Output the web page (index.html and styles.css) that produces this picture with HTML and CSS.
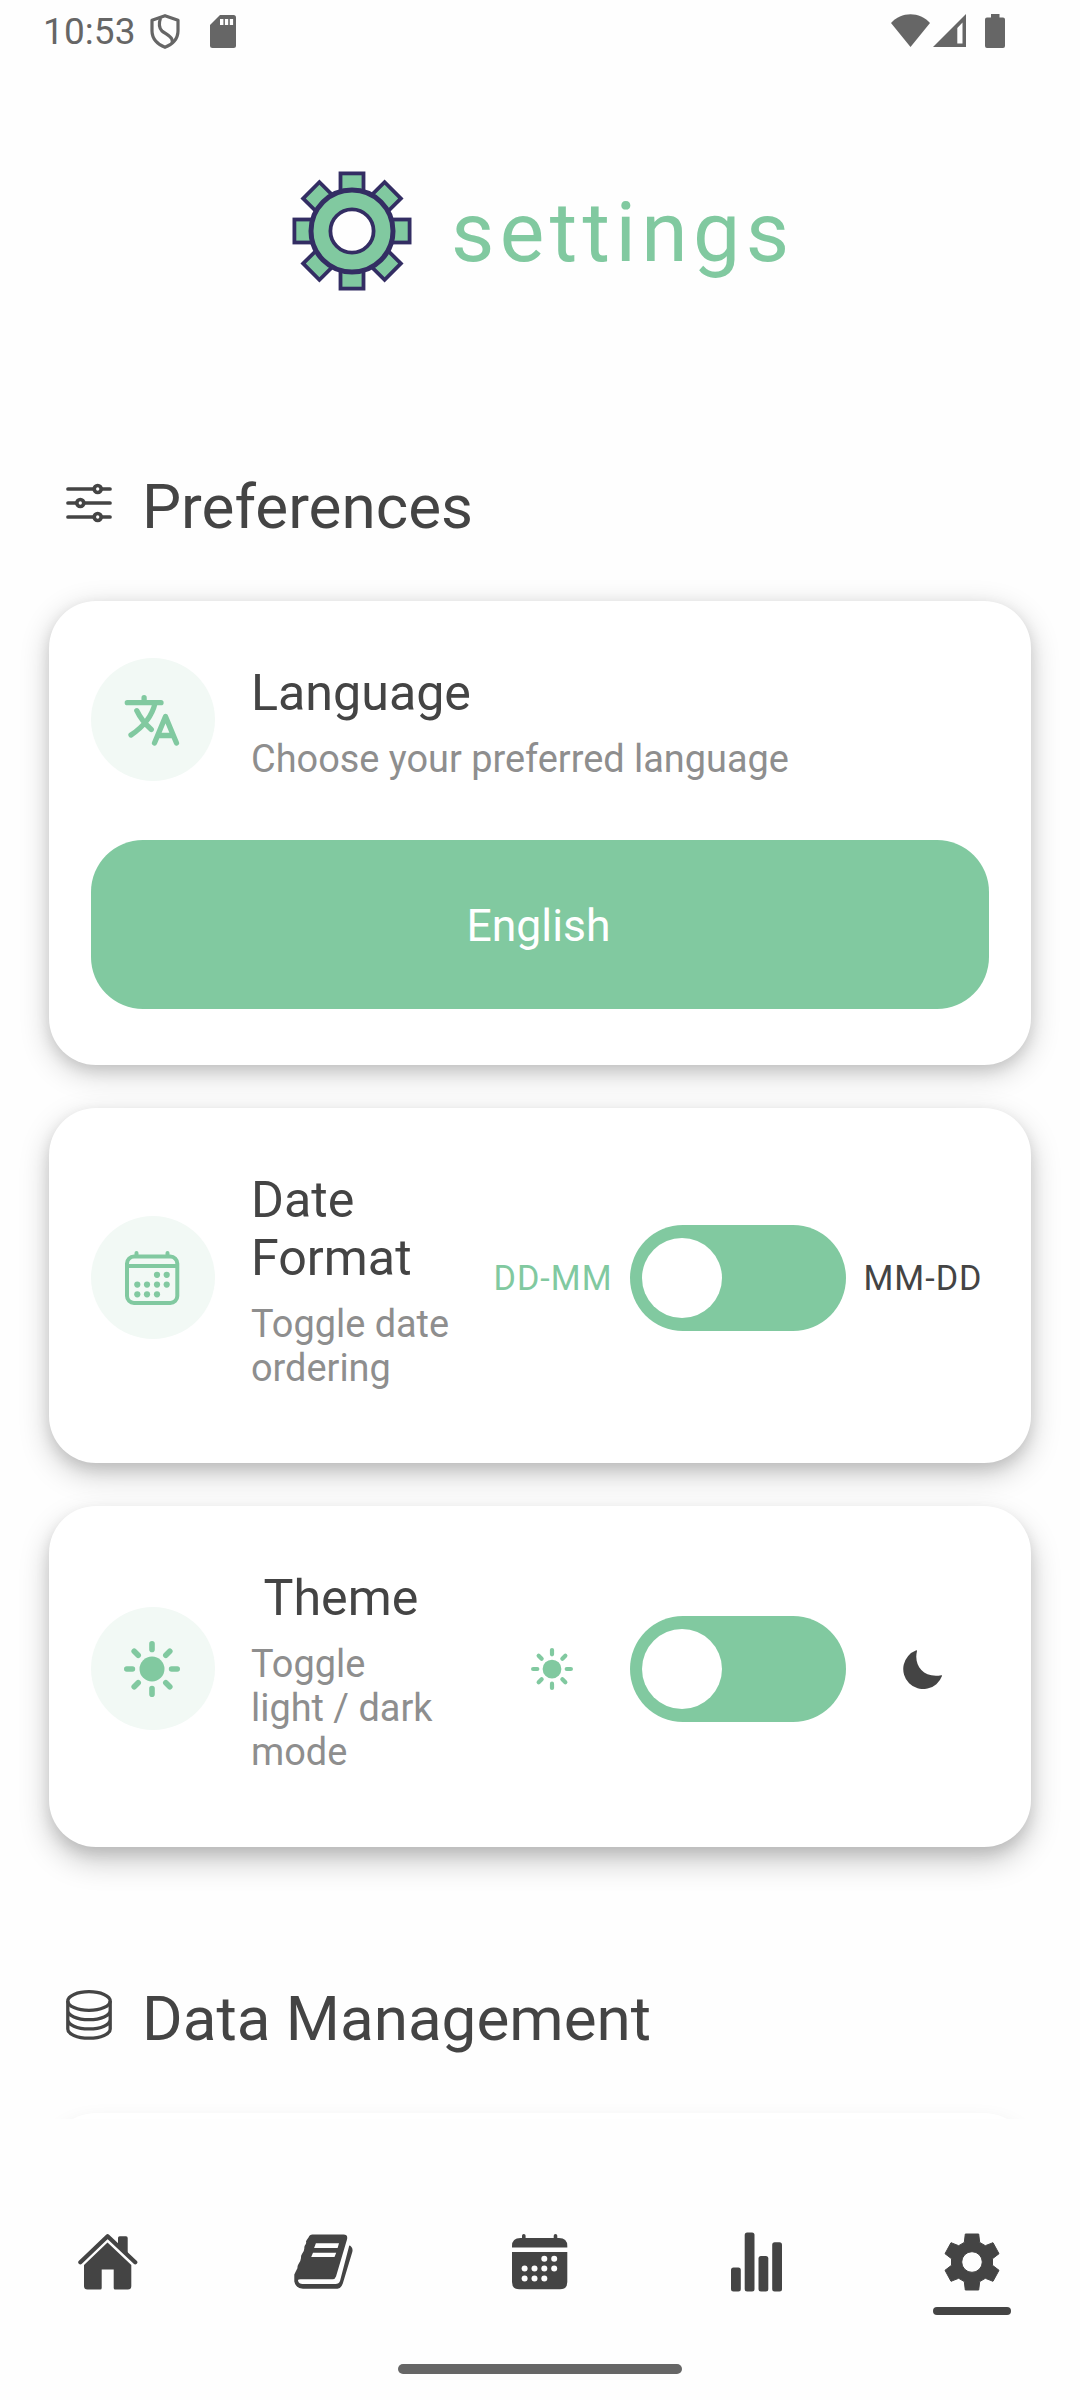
FILE: index.html
```html
<!DOCTYPE html>
<html lang="en">
<head>
<meta charset="utf-8">
<title>Settings</title>
<link rel="stylesheet" href="styles.css">
</head>
<body>
<svg class="defs" width="0" height="0" aria-hidden="true">
  <symbol id="sun" viewBox="0 0 56 56">
    <circle cx="28" cy="28" r="12.500" fill="currentColor"/>
    <path d="M28 2.800v5.600M28 47.600v5.600M2.800 28h5.600M47.600 28h5.600M10.200 10.200l4 4M41.800 41.800l4 4M10.200 45.800l4-4M41.800 14.200l4-4" stroke="currentColor" stroke-width="5.600" stroke-linecap="round"/>
  </symbol>
</svg>

<header class="status">
  <span class="time">10:53</span>
  <svg class="shield" width="30" height="35" viewBox="0 0 30 35" fill="none" stroke="#666" stroke-width="3.200" stroke-linejoin="round">
    <path d="M15 1.700L28 6.200V17C28 24.500 22.500 31 15 33.300C7.500 31 2 24.500 2 17V6.200Z"/>
    <path d="M10.500 4C8.500 10 9 14 12 17C15 19.800 20.500 21.500 22 25.500L22.500 29"/>
  </svg>
  <svg class="sd" width="26" height="33" viewBox="0 0 26 33"><path fill="#666" d="M10 0H23.500Q26 0 26 2.500V30.500Q26 33 23.500 33H2.500Q0 33 0 30.500V10Z"/><path fill="#fefefe" d="M10 4h3.400v6H10zM14.900 4h3.300v6h-3.300zM19.800 4h3.300v6h-3.300z"/></svg>
  <svg class="wifi" width="39" height="33" viewBox="0 0 39 33"><path fill="#666" d="M0 9C10 -2.800 29 -2.800 39 9L19.500 33Z"/></svg>
  <svg class="signal" width="33" height="33" viewBox="0 0 33 33"><path fill="#666" fill-rule="evenodd" d="M33 0V33H0ZM29.500 8.500L24.300 14V29.500H29.500Z"/></svg>
  <svg class="battery" width="20" height="34" viewBox="0 0 20 34"><path fill="#666" d="M6 0h8.500v3.500H18Q20 3.500 20 5.500V32Q20 34 18 34H2Q0 34 0 32V5.500Q0 3.500 2 3.500H6z"/></svg>
</header>

<main class="content">
  <div class="title">
    <svg width="120" height="120" viewBox="-60 -60 120 120" fill="#81c9a0" stroke="#332d63" stroke-width="3.800">
      <g>
        <rect x="-11.500" y="-57.600" width="23" height="24"/>
        <rect x="-11.500" y="-57.600" width="23" height="24" transform="rotate(45)"/>
        <rect x="-11.500" y="-57.600" width="23" height="24" transform="rotate(90)"/>
        <rect x="-11.500" y="-57.600" width="23" height="24" transform="rotate(135)"/>
        <rect x="-11.500" y="-57.600" width="23" height="24" transform="rotate(180)"/>
        <rect x="-11.500" y="-57.600" width="23" height="24" transform="rotate(225)"/>
        <rect x="-11.500" y="-57.600" width="23" height="24" transform="rotate(270)"/>
        <rect x="-11.500" y="-57.600" width="23" height="24" transform="rotate(315)"/>
      </g>
      <circle r="41" stroke-width="5"/>
      <circle r="21.600" fill="#fefefe"/>
    </svg>
    <h1>settings</h1>
  </div>

  <div class="section preferences">
    <svg width="46" height="40" viewBox="0 0 46 40" fill="#fefefe" stroke="#444" stroke-width="3.700" stroke-linecap="round">
      <path d="M2 6H44M2 20H44M2 34H44"/>
      <circle cx="31.700" cy="6" r="3.500"/><circle cx="14.300" cy="20" r="3.500"/><circle cx="31.700" cy="34" r="3.500"/>
    </svg>
    <h2>Preferences</h2>
  </div>

  <section class="card language">
    <div class="row">
      <div class="badge">
        <svg width="56" height="56" viewBox="0 0 56 56" fill="none" stroke="currentColor" stroke-width="5.300" stroke-linecap="round" stroke-linejoin="round">
          <path d="M3.300 10.700H37M20.100 5.700V10M31 11.500C27.500 26 19 35 7 43M12.800 18.700C16 25.500 21 32 27.300 37.500M30.500 51L41.500 24.500L52.500 51M36 43.500H47.500"/>
        </svg>
      </div>
      <div class="text">
        <h3>Language</h3>
        <p>Choose your preferred language</p>
      </div>
    </div>
    <button class="select">English</button>
  </section>

  <section class="card date">
    <div class="row">
      <div class="badge">
        <svg width="56" height="56" viewBox="0 0 56 56" fill="none" stroke="currentColor" stroke-width="4">
          <rect x="3" y="6.500" width="50.300" height="46.500" rx="7"/>
          <path d="M3 16H53"/><path stroke-linecap="round" d="M12.500 3V6M43.500 3V6"/>
          <g fill="currentColor" stroke="none">
            <circle cx="33" cy="24.800" r="3.100"/><circle cx="42.700" cy="24.800" r="3.100"/>
            <circle cx="13.300" cy="34.600" r="3.100"/><circle cx="23" cy="34.600" r="3.100"/><circle cx="33" cy="34.600" r="3.100"/><circle cx="42.700" cy="34.600" r="3.100"/>
            <circle cx="13.300" cy="44.300" r="3.100"/><circle cx="23" cy="44.300" r="3.100"/><circle cx="33" cy="44.300" r="3.100"/>
          </g>
        </svg>
      </div>
      <div class="text narrow">
        <h3>Date Format</h3>
        <p>Toggle date ordering</p>
      </div>
      <div class="switch">
        <span class="on">DD-MM</span>
        <span class="track"><span class="knob"></span></span>
        <span>MM-DD</span>
      </div>
    </div>
  </section>

  <section class="card theme">
    <div class="row">
      <div class="badge"><svg width="56" height="56"><use href="#sun"/></svg></div>
      <div class="text narrow">
        <h3>&nbsp;Theme</h3>
        <p>Toggle light&nbsp;/&nbsp;dark mode</p>
      </div>
      <div class="switch">
        <span class="on sun"><svg width="42" height="42"><use href="#sun"/></svg></span>
        <span class="track"><span class="knob"></span></span>
        <span><svg width="40" height="39" viewBox="0 0 40 39"><path fill="currentColor" d="M13.300 0.300Q14 0 14 1C10.500 15 20 28.500 38.300 25.200Q39.300 25 39 26A20 20 0 1 1 13.300 0.300Z"/></svg></span>
      </div>
    </div>
  </section>

  <div class="section data">
    <svg width="46" height="50" viewBox="0 0 46 50" fill="none" stroke="#444" stroke-width="3.300">
      <ellipse cx="23" cy="11" rx="21.200" ry="9.300"/>
      <path d="M1.800 11V39C1.800 44 11 48.200 23 48.200S44.200 44 44.200 39V11M1.800 20.300C1.800 25.500 11 29.600 23 29.600S44.200 25.500 44.200 20.300M1.800 29.600C1.800 34.700 11 38.900 23 38.900S44.200 34.700 44.200 29.600"/>
    </svg>
    <h2>Data Management</h2>
  </div>

  <section class="card next"></section>
</main>

<nav class="tabs">
  <a class="tab"><svg width="60" height="56" viewBox="0 0 60 56">
    <path fill="none" stroke="#444" stroke-width="4.300" stroke-linecap="round" stroke-linejoin="round" d="M2.400 28.300L29.600 2.300L57.200 28.300"/>
    <path fill="#444" d="M40 11V4Q40 2.300 41.700 2.300H48Q49.700 2.300 49.700 4V20.500ZM29.500 8.500L53.300 31V52Q53.300 55.500 49.800 55.500H37.200Q35.700 55.500 35.700 54V35.500H23.700V54Q23.700 55.500 22.200 55.500H9.500Q6 55.500 6 52V31Z"/>
  </svg></a>
  <a class="tab"><svg width="60" height="56" viewBox="0 0 60 56">
    <path fill="#444" fill-rule="evenodd" d="M18.500 0.500H49.500Q54.200 0.500 53 5.500L42 42.500Q41 45.300 38.500 45.300H6.500Q3.500 45.300 4 46.800Q5 50 8.500 50H41.500Q45 50 46 47L55 12.500Q55.300 10.500 57 12.500Q59.200 14.500 58.300 18L48.800 49.500Q47 54.700 43.500 54.700H9Q2 54.700 0.300 47.500V40.500Q2.500 36 3.500 34Q3.200 32 4.500 30Q7 26 7 24Q6.800 21.500 8 20Q10.500 16.500 10.300 14Q10.200 12 11.500 10.500Q12.500 9 12 7.500Q12.500 6 14.500 3.500Q15.500 0.500 18.500 0.500ZM21.900 9.300L20.100 14H43.600L45 9.300ZM19 18.700L17.200 23H40.500L42.200 18.700Z"/>
  </svg></a>
  <a class="tab"><svg width="56" height="56" viewBox="0 0 56 56">
    <path fill="#444" d="M0 13.500V12Q0 4 8.500 4H10V1.800A1.800 1.800 0 0 1 13.600 1.800V4H41.700V1.800A1.800 1.800 0 0 1 45.300 1.800V4H47Q55.300 4 55.300 12V13.500ZM0 18H55.300V48Q55.300 55.300 48 55.300H7.300Q0 55.300 0 48Z"/>
    <g fill="#fefefe"><circle cx="32.300" cy="24.800" r="3"/><circle cx="42.200" cy="24.800" r="3"/><circle cx="12.600" cy="34.600" r="3"/><circle cx="22.500" cy="34.600" r="3"/><circle cx="32.300" cy="34.600" r="3"/><circle cx="42.200" cy="34.600" r="3"/><circle cx="12.600" cy="44.500" r="3"/><circle cx="22.500" cy="44.500" r="3"/><circle cx="32.300" cy="44.500" r="3"/></g>
  </svg></a>
  <a class="tab"><svg width="51" height="59" viewBox="0 0 51 59" fill="#444">
    <rect x="0" y="35" width="9.800" height="24" rx="2.500"/><rect x="13.700" y="0" width="9.800" height="59" rx="2.500"/><rect x="27.500" y="23.500" width="9.800" height="35.500" rx="2.500"/><rect x="41.200" y="9.700" width="9.800" height="49.300" rx="2.500"/>
  </svg></a>
  <a class="tab active"><svg width="56" height="58" viewBox="-28 -29 56 58">
    <path fill="#444" stroke="#444" stroke-linejoin="round" fill-rule="evenodd" d="M-6.700 -28H6.700L7.700 -19.600L13.300 -16.300L21 -19.300L27 -8.300L20.500 -3.300V3.300L27 8.300L21 19.300L13.300 16.300L7.700 19.600L6.700 28H-6.700L-7.700 19.600L-13.300 16.300L-21 19.300L-27 8.300L-20.500 3.300V-3.300L-27 -8.300L-21 -19.300L-13.300 -16.300L-7.700 -19.600ZM10.300 0A10.300 10.300 0 1 0 -10.300 0A10.300 10.300 0 1 0 10.300 0Z"/>
  </svg></a>
</nav>
<div class="gesture"></div>
</body>
</html>
```
FILE: styles.css
```css
* { box-sizing: border-box; margin: 0; padding: 0; }

body {
  width: 1080px;
  height: 2400px;
  display: flex;
  flex-direction: column;
  background: #fefefe;
  color: #444;
  font-family: Roboto, sans-serif;
  font-weight: 400;
  overflow: hidden;
}

svg { display: block; flex: none; }
.defs { position: absolute; }
h1, h2, h3 { font-weight: 400; }

/* Status bar */
.status {
  flex: none;
  height: 64px;
  padding: 14px 75px 0 43px;
  display: flex;
  align-items: flex-start;
  color: #666;
}
.time { width: 107px; font-size: 37px; line-height: 36px; letter-spacing: 0.1px; white-space: nowrap; }
.sd { margin: 1px 0 0 30px; }
.wifi { margin-left: auto; }
.signal { margin-left: 3px; }
.battery { margin-left: 19px; }

/* Scrolling page */
.content {
  flex: none;
  height: 2055px;
  overflow: hidden;
  padding: 0 49px;
}
.title {
  margin-top: 107px;
  height: 121px;
  padding-left: 243px;
  display: flex;
  align-items: flex-start;
  gap: 39px;
  color: #81c9a0;
}
h1 { margin-top: 12px; font-size: 84px; line-height: 100px; letter-spacing: 5.400px; }

.section { display: flex; align-items: center; height: 80px; padding-left: 17px; gap: 30px; }
.section svg { margin-bottom: 8px; }
h2 { font-size: 62px; line-height: 80px; }
.preferences { margin-top: 175px; }
.data { margin-top: 132px; }

.card {
  background: #fff;
  border-radius: 47px;
  padding: 57px 42px 0;
  box-shadow: 0 8px 30px rgba(0, 0, 0, 0.2), 0 5px 14px rgba(0, 0, 0, 0.1);
}
.language { margin-top: 54px; height: 464px; }
.date { margin-top: 43px; height: 355px; box-shadow: 0 11px 30px rgba(0, 0, 0, 0.21), 0 6px 14px rgba(0, 0, 0, 0.1); }
.theme { margin-top: 43px; height: 341px; box-shadow: 0 14px 30px rgba(0, 0, 0, 0.22), 0 7px 14px rgba(0, 0, 0, 0.1); }
.next { margin-top: 54px; height: 300px; box-shadow: 0 14px 26px -2px rgba(0, 0, 0, 0.2); }

.row { display: flex; align-items: center; }
.badge {
  flex: none;
  width: 124px;
  height: 123px;
  border-radius: 50%;
  background: #f2f9f5;
  color: #81c9a0;
  display: flex;
  align-items: center;
  justify-content: center;
  padding-right: 2px;
}
.text { margin-left: 36px; padding-top: 6px; }
.narrow { width: 205px; }
h3 { font-size: 50.200px; line-height: 58px; margin-bottom: 15px; }
p { font-size: 37.900px; line-height: 44px; color: #8e8e8e; }

.select {
  display: block;
  width: 898px;
  height: 169px;
  margin-top: 59px;
  padding: 2px 3px 0 0;
  border: 0;
  border-radius: 52px;
  background: #81c9a0;
  color: #fff;
  font: 44.500px/52px Roboto, sans-serif;
}

.switch {
  margin: 1px 7px 0 auto;
  display: grid;
  grid-template-columns: 118px 216px 118px;
  gap: 18px;
  align-items: center;
  justify-items: center;
  font-size: 34.200px;
  line-height: 40px;
  letter-spacing: 1px;
  white-space: nowrap;
}
.on { color: #81c9a0; }
.sun { padding-right: 2px; }
.track { width: 216px; height: 106px; padding: 13px 12px; border-radius: 53px; background: #81c9a0; }
.knob { display: block; width: 80px; height: 80px; border-radius: 50%; background: #fff; }

/* Bottom navigation */
.tabs {
  flex: none;
  height: 245px;
  padding-top: 112px;
  display: grid;
  grid-template-columns: repeat(5, 1fr);
}
.tab { height: 85px; display: flex; flex-direction: column; align-items: center; }
.tab svg { height: 62px; }
.active::after { content: ""; width: 78px; height: 8px; margin-top: 14px; border-radius: 4px; background: #444; }
.gesture { flex: none; width: 284px; height: 10px; margin-left: 398px; border-radius: 5px; background: #666; }
```
